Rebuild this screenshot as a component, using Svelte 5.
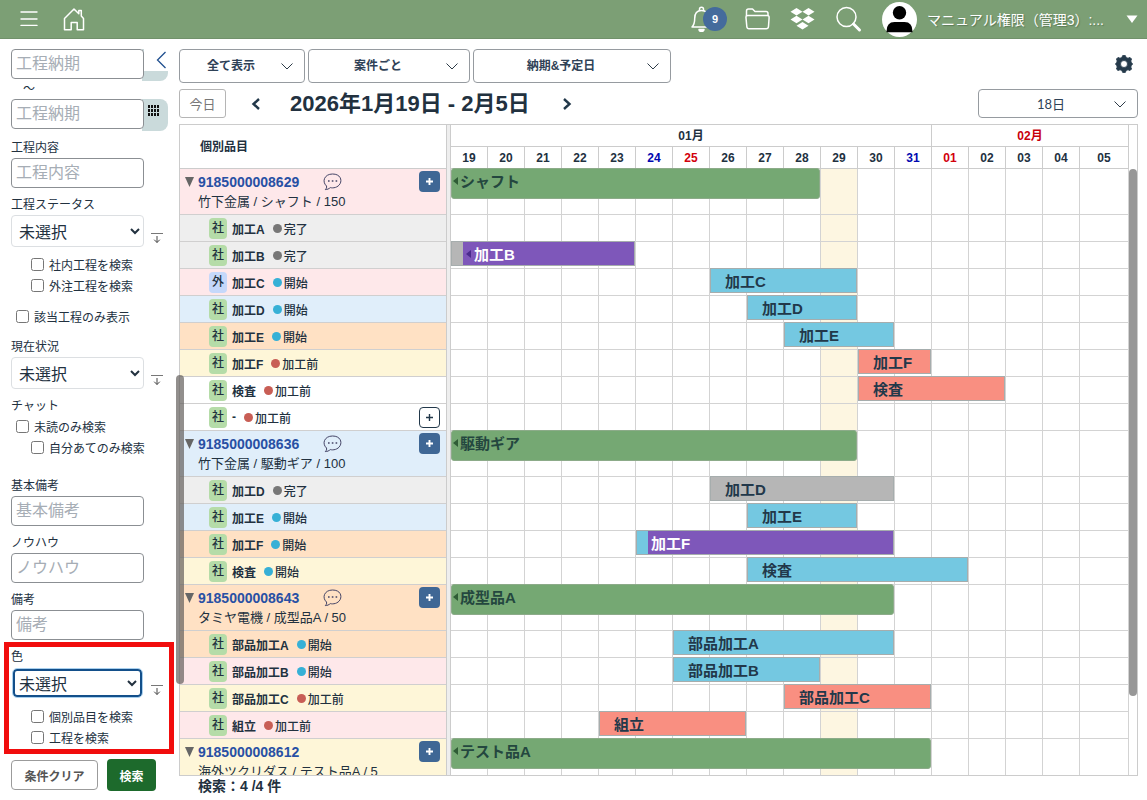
<script>
  const statuses = {
    done: { label: '完了', color: '#777' },
    started: { label: '開始', color: '#36b0d6' },
    before: { label: '加工前', color: '#c85e55' },
  };

  const days = [19, 20, 21, 22, 23, 24, 25, 26, 27, 28, 29, 30, 31, 1, 2, 3, 4, 5].map((d) => ({
    text: String(d).padStart(2, '0'),
    kind: d === 24 || d === 31 ? 'sat' : d === 25 || d === 1 ? 'sun' : '',
    today: d === 29,
  }));

  // Bars are given as [first column, end column, colour] on the 18-day grid.
  const groups = [
    {
      no: '9185000008629', info: '竹下金属 / シャフト / 150', bg: 'pink', chat: true, bar: [1, 11], label: 'シャフト',
      rows: [
        { name: '加工A', status: 'done', bg: 'gray' },
        { name: '加工B', status: 'done', bg: 'gray', bar: [1, 6, 'purple'], lead: 'gray', before: true },
        { name: '加工C', status: 'started', bg: 'pink', bar: [8, 12, 'blue'], outside: true },
        { name: '加工D', status: 'started', bg: 'blue', bar: [9, 12, 'blue'] },
        { name: '加工E', status: 'started', bg: 'orange', bar: [10, 13, 'blue'] },
        { name: '加工F', status: 'before', bg: 'yellow', bar: [12, 14, 'red'] },
        { name: '検査', status: 'before', bg: 'white', bar: [12, 16, 'red'] },
        { name: '-', status: 'before', bg: 'white', add: true },
      ],
    },
    {
      no: '9185000008636', info: '竹下金属 / 駆動ギア / 100', bg: 'blue', chat: true, bar: [1, 12], label: '駆動ギア',
      rows: [
        { name: '加工D', status: 'done', bg: 'gray', bar: [8, 13, 'gray'] },
        { name: '加工E', status: 'started', bg: 'blue', bar: [9, 12, 'blue'] },
        { name: '加工F', status: 'started', bg: 'orange', bar: [6, 13, 'purple'], lead: 'blue' },
        { name: '検査', status: 'started', bg: 'yellow', bar: [9, 15, 'blue'] },
      ],
    },
    {
      no: '9185000008643', info: 'タミヤ電機 / 成型品A / 50', bg: 'orange', chat: true, bar: [1, 13], label: '成型品A',
      rows: [
        { name: '部品加工A', status: 'started', bg: 'orange', bar: [7, 13, 'blue'] },
        { name: '部品加工B', status: 'started', bg: 'pink', bar: [7, 11, 'blue'] },
        { name: '部品加工C', status: 'before', bg: 'yellow', bar: [10, 14, 'red'] },
        { name: '組立', status: 'before', bg: 'pink', bar: [5, 9, 'red'] },
      ],
    },
    {
      no: '9185000008612', info: '海外ツクリダス / テスト品A / 5', bg: 'yellow', chat: false, bar: [1, 14], label: 'テスト品A',
      rows: [],
    },
  ];
</script>

{#snippet check(label, nested)}
  <label class="check" class:nested><input type="checkbox" /><span>{label}</span></label>
{/snippet}

{#snippet textField(id, label)}
  <div class="field">
    <label class="caption" for={id}>{label}</label>
    <input class="text" {id} type="text" placeholder={label} />
  </div>
{/snippet}

{#snippet pick(id, label)}
  <label class="caption" for={id}>{label}</label>
  <div class="pick">
    <select {id}><option>未選択</option></select>
    <button class="expand" aria-label="展開">
      <svg width="12" height="11" viewBox="0 0 12 11" fill="none" stroke="#444"><path d="M0 1.500h12" stroke="#777" /><path d="M6 4v6.500M3.200 7.700l2.800 2.800 2.800-2.800" /></svg>
    </button>
  </div>
{/snippet}

{#snippet dropdown(cls, label, text)}
  <div class="dropdown {cls}">
    <select aria-label={label}><option>{text}</option></select>
    <svg width="12" height="7" viewBox="0 0 12 7" fill="none" stroke="#2d3b47"><path d="M.5.5 6 6 11.5.5" /></svg>
  </div>
{/snippet}

{#snippet calendarIcon()}
  <svg width="11" height="11" viewBox="0 0 11 11" fill="#111">
    {#each [0, 4, 8] as y}{#each [0, 3, 6, 9] as x}<rect {x} {y} width="2" height="3" />{/each}{/each}
  </svg>
{/snippet}

{#snippet cells()}
  {#each days as day, i}<span class="cell" class:today={day.today} style:grid-column={i + 1}></span>{/each}
{/snippet}

<div class="app">
  <header>
    <button class="icon" aria-label="メニュー">
      <svg width="18" height="16" viewBox="0 0 18 16" stroke="#fff" stroke-width="1.4" stroke-linecap="round"><path d="M1 1h16M1 8h16M1 14.400h16" /></svg>
    </button>
    <a class="icon home" href="#home" aria-label="ホーム">
      <svg width="22" height="23" viewBox="0 0 22 23" fill="none" stroke="#fff" stroke-width="1.500" stroke-linejoin="round"><path d="M1.500 10.500 11 1l4.800 4.700V2.500h2.500v5.600l2.200 2.400v11.300h-6.300v-7.300h-6v7.300H1.500z" /></svg>
    </a>
    <div class="tools">
      <button class="icon bell" aria-label="通知">
        <svg width="22" height="26" viewBox="0 0 22 26" fill="none" stroke="#fff" stroke-width="1.500" stroke-linejoin="round"><path d="M1 21c2-2 2.700-4.500 2.700-8.500 0-5 2.600-8 6.800-8s6.800 3 6.800 8c0 4 .7 6.500 2.700 8.500z" /><path d="M8.500 4.500V3.200a2 2 0 0 1 4 0v1.300" /><path d="M8 23.500h5a2.500 2 0 0 1-5 0z" fill="#fff" /></svg>
        <span class="count">9</span>
      </button>
      <button class="icon folder" aria-label="フォルダ">
        <svg width="25" height="22" viewBox="0 0 25 22" fill="none" stroke="#fff" stroke-width="1.500" stroke-linejoin="round"><path d="M1.500 8V3Q1.500 1 3.500 1h4l2.500 2.500h11q2 0 2 2V8" /><path d="M3 7.500h19q2.300 0 2.100 2.300l-.6 8.700q-.2 2.300-2.300 2.300H4q-2 0-2.200-2.300L1 9.800q-.2-2.300 2-2.300z" /></svg>
      </button>
      <button class="icon drop" aria-label="Dropbox">
        <svg width="25" height="22" viewBox="0 0 25 22" fill="#fff"><path d="m6.500 0 6 3.800-6 3.800-6-3.800zM18.500 0l6 3.800-6 3.800-6-3.800zM6.500 7.700l6 3.800-6 3.800-6-3.800zM18.500 7.700l6 3.800-6 3.800-6-3.800zM12.500 14l6 3.800-6 3.800-6-3.800z" /></svg>
      </button>
      <button class="icon" aria-label="検索">
        <svg width="27" height="27" viewBox="0 0 27 27" fill="none" stroke="#fff"><circle cx="11.500" cy="11" r="9.500" stroke-width="1.500" /><path d="m18.500 18 6 6" stroke-width="3" stroke-linecap="round" /></svg>
      </button>
      <button class="user">
        <svg width="35" height="35" viewBox="0 0 35 35"><circle cx="17.500" cy="17.500" r="17.500" fill="#fff" /><circle cx="17.500" cy="10.800" r="6.700" /><path d="M4.500 29.500q0-9.500 8-9.500h10q8 0 8 9.500v.8h-26z" /></svg>
        <span class="name">マニュアル権限（管理3）:...</span>
        <svg width="12" height="8" viewBox="0 0 12 8" fill="#fff"><path d="M.5.500h11L6 8z" /></svg>
      </button>
    </div>
  </header>

  <div class="body">
    <aside>
      <div class="date">
        <input class="text" type="text" placeholder="工程納期" aria-label="工程納期 開始" />
        <button class="cal" aria-label="カレンダー"></button>
        <button class="collapse" aria-label="閉じる">
          <svg width="11" height="18" viewBox="0 0 11 18" fill="none" stroke="#1f4f8f" stroke-width="1.300"><path d="M9.500 1 1.500 9l8 8" /></svg>
        </button>
      </div>
      <div class="tilde">〜</div>
      <div class="date">
        <input class="text" type="text" placeholder="工程納期" aria-label="工程納期 終了" />
        <button class="cal" aria-label="カレンダー">{@render calendarIcon()}</button>
      </div>
      <div class="stack">
        {@render textField('content', '工程内容')}
        <div class="field">
          {@render pick('status', '工程ステータス')}
          <div class="checks">
            {@render check('社内工程を検索', true)}
            {@render check('外注工程を検索', true)}
          </div>
        </div>
        <div class="only">{@render check('該当工程のみ表示', false)}</div>
        <div class="field">{@render pick('current', '現在状況')}</div>
        <div class="field chat">
          <span class="caption">チャット</span>
          {@render check('未読のみ検索', false)}
          {@render check('自分あてのみ検索', true)}
        </div>
        {@render textField('basic', '基本備考')}
        {@render textField('knowhow', 'ノウハウ')}
        {@render textField('note', '備考')}
      </div>
      <div class="field marked">
        {@render pick('color', '色')}
        <div class="checks">
          {@render check('個別品目を検索', true)}
          {@render check('工程を検索', true)}
        </div>
      </div>
      <div class="actions">
        <button class="clear">条件クリア</button>
        <button class="search">検索</button>
      </div>
      <span class="thumb"></span>
    </aside>

    <main>
      <div class="bar-row">
        {@render dropdown('w1', '表示', '全て表示')}
        {@render dropdown('w2', '単位', '案件ごと')}
        {@render dropdown('w3', '日付', '納期&予定日')}
        <button class="gear" aria-label="設定">
          <svg width="18" height="18" viewBox="0 0 18 18" fill="#253a4b"><path fill-rule="evenodd" stroke="#253a4b" stroke-width=".8" stroke-linejoin="round" d="M7.700.5h2.600l.9 2 1.800.7 2-.8 1.600 1.600-.8 2 .7 1.700 1.200 1.300-1.200 1.300-.7 1.700.8 2-1.600 1.600-2-.8-1.800.7-.9 2H7.700l-.9-2-1.800-.7-2 .8L1.400 14l.8-2-.7-1.700L.4 9l1.100-1.300.7-1.700-.8-2L3 2.400l2 .8 1.800-.7zM9 5.500a3.500 3.500 0 1 0 0 7 3.500 3.500 0 0 0 0-7z" /></svg>
        </button>
      </div>
      <div class="bar-row second">
        <button class="today-btn">今日</button>
        <button class="step" aria-label="前へ"><svg width="10" height="12" viewBox="0 0 10 12" fill="none" stroke="#22384a" stroke-width="2.400"><path d="M8 1 2.500 6 8 11" /></svg></button>
        <h1>2026年1月19日 - 2月5日</h1>
        <button class="step" aria-label="次へ"><svg width="10" height="12" viewBox="0 0 10 12" fill="none" stroke="#22384a" stroke-width="2.400"><path d="M2 1l5.500 5L2 11" /></svg></button>
        {@render dropdown('range', '期間', '18日')}
      </div>

      <div class="gantt">
        <section class="items">
          <div class="items-head">個別品目</div>
          {#each groups as g}
            <div class="group {g.bg}">
              <div class="line">
                <button class="fold" aria-label="折りたたむ"><svg width="11" height="10" viewBox="0 0 11 10" fill="#666"><path d="M1 0h9L5.500 10z" /></svg></button>
                <a href="#item">{g.no}</a>
                {#if g.chat}
                  <button class="talk" aria-label="チャット">
                    <svg width="19" height="18" viewBox="0 0 19 18" fill="none" stroke="#446"><path d="M3.500 13C-1.500 8.500 1.500 1 9.500 1S19 7 17.200 10.500C15 14.800 9.800 15.300 7.300 14.600 6 15.800 4.200 16.600 2.300 16.600 3.400 15.600 3.900 14.500 3.500 13z" /><path d="M5 8h1.600M8.800 8h1.600M12.600 8h1.600" stroke-width="1.700" /></svg>
                  </button>
                {/if}
                <button class="plus" aria-label="追加"><svg width="9" height="9" viewBox="0 0 9 9" stroke="currentColor" stroke-width="1.900"><path d="M4.500 1v7M1 4.500h7" /></svg></button>
              </div>
              <div class="info">{g.info}</div>
            </div>
            {#each g.rows as r}
              <div class="item {r.bg}">
                <span class="badge" class:outside={r.outside}>{r.outside ? '外' : '社'}</span>
                <b>{r.name}</b>
                <i class="dot" style:background={statuses[r.status].color}></i>
                <span class="state">{statuses[r.status].label}</span>
                {#if r.add}
                  <button class="plus open" aria-label="追加"><svg width="9" height="9" viewBox="0 0 9 9" stroke="currentColor" stroke-width="1.400"><path d="M4.500 1v7M1 4.500h7" /></svg></button>
                {/if}
              </div>
            {/each}
          {/each}
        </section>
        <div class="divider"></div>
        <section class="chart">
          <div class="track months"><span class="jan">01月</span><span class="feb">02月</span></div>
          <div class="track dates">{#each days as d}<span class={d.kind}>{d.text}</span>{/each}</div>
          <div class="rows">
            {#each groups as g}
              <div class="track tall">
                {@render cells()}
                <div class="bar total" style:grid-column="{g.bar[0]} / {g.bar[1]}">
                  <svg width="5" height="8" viewBox="0 0 5 8" fill="#2f5c36"><path d="M5 0v8L0 4z" /></svg>{g.label}
                </div>
              </div>
              {#each g.rows as r}
                <div class="track">
                  {@render cells()}
                  {#if r.bar}
                    <div class="bar task b-{r.bar[2]}" class:before={r.before} style:grid-column="{r.bar[0]} / {r.bar[1]}">
                      {#if r.lead}<span class="lead b-{r.lead}"></span>{/if}
                      {#if r.before}<svg width="5" height="8" viewBox="0 0 5 8" fill="#4a2a8c"><path d="M5 0v8L0 4z" /></svg>{/if}
                      {r.name}
                    </div>
                  {/if}
                </div>
              {/each}
            {/each}
          </div>
        </section>
        <div class="gutter"><span></span></div>
      </div>
      <footer>検索：4 /4 件</footer>
    </main>
  </div>
</div>

<style>
  :global(body) { margin: 0; background: #fff; }
  .app { height: 100vh; display: flex; flex-direction: column; overflow: hidden; color: #22313f; font: 12px "Liberation Sans", "Noto Sans CJK JP", sans-serif; }
  .app *, .app *::before { box-sizing: border-box; }
  button, input, select { font-family: inherit; color: inherit; margin: 0; }
  button { border: 0; padding: 0; background: none; display: flex; align-items: center; justify-content: center; }
  svg { display: block; flex: none; }

  header { height: 39px; flex: none; background: #7c9f75; border-bottom: 1px solid #71916b; display: flex; align-items: center; padding: 0 9px 0 20px; }
  .home { margin-left: 25px; }
  .tools { margin-left: auto; display: flex; align-items: center; }
  .bell { position: relative; width: 38px; justify-content: flex-start; }
  .count { position: absolute; left: 12px; top: 1px; width: 24px; height: 24px; border-radius: 50%; background: #446b9c; color: #fff; font-weight: bold; font-size: 11px; line-height: 24px; }
  .folder { margin: 0 20px 0 16px; }
  .drop { margin-right: 20px; }
  .user { margin-left: 20px; color: #fff; font-size: 14px; }
  .name { margin: 0 22px 0 10px; white-space: nowrap; text-shadow: 1px 1px 1px #5c7b58; }

  .body { flex: 1; min-height: 0; display: flex; }
  aside { width: 179px; flex: none; padding: 10px 5px 0 4px; position: relative; }
  .date { display: flex; position: relative; height: 30px; padding-left: 7px; }
  .text { width: 133px; height: 30px; border: 1px solid #8b8f93; border-radius: 4px; padding: 0 4px; font-size: 16px; background: #fff; z-index: 1; }
  .text::placeholder { color: #a6adb5; }
  .cal { width: 26px; height: 32px; margin-left: -2px; background: #cadadb; border-radius: 0 8px 8px 0; align-items: flex-start; padding: 6px 4px 0 0; }
  .collapse { position: absolute; left: 140px; top: -4px; width: 30px; height: 26px; background: #fff; }
  .collapse svg { margin: 4px 0 0 4px; }
  .tilde { height: 20px; line-height: 20px; padding-left: 19px; }
  .stack { padding: 7px 0 2px 7px; display: flex; flex-direction: column; gap: 5px; }
  .field { display: flex; flex-direction: column; }
  .caption { line-height: 22px; padding-top: 1px; height: 22px; }
  .pick { display: flex; align-items: flex-end; gap: 7px; }
  .pick select { width: 133px; height: 32px; border: 1px solid #dcdfe2; border-radius: 4px; background: #fff; font-size: 16px; padding: 2px 0 0 3px; }
  .expand { padding-bottom: 4px; }
  .checks { padding-top: 7px; }
  .check { display: flex; align-items: center; gap: 5px; height: 21px; padding-left: 5px; white-space: nowrap; }
  .check.nested { padding-left: 20px; }
  .check input { width: 13px; height: 13px; }
  .only { padding: 5px 0 3px; }
  .chat { padding-bottom: 11px; }
  .marked { width: 170px; border: 5px solid #f10d0d; padding: 0 0 0 2px; }
  .marked .caption { line-height: 20px; height: 20px; padding: 0; }
  .marked .pick { padding: 2px 0 0 2px; gap: 9px; }
  .marked select { width: 129px; height: 28px; border: 2px solid #134f8a; outline: 1px solid #a9d0ee; padding-left: 0; }
  .marked .expand { padding-bottom: 2px; }
  .marked .checks { padding: 9px 0 1px; }
  .actions { display: flex; align-items: center; gap: 9px; padding: 5px 0 0 7px; }
  .clear { width: 87px; height: 30px; border: 1px solid #9b9b9b; border-radius: 4px; color: #555; font-weight: bold; font-size: 12px; }
  .search { width: 49px; height: 32px; border-radius: 4px; background: #1d6a2c; color: #fff; font-weight: bold; font-size: 12px; }
  .thumb { position: absolute; left: 176px; top: 336px; width: 8px; height: 309px; border-radius: 4px; background: rgba(100, 95, 92, 0.7); z-index: 2; }

  main { flex: 1; min-width: 0; display: flex; flex-direction: column; padding: 10px 9px 0 0; }
  .bar-row { display: flex; gap: 3px; height: 34px; flex: none; align-items: center; }
  .bar-row.second { height: 29px; margin: 6px 0; gap: 0; }
  .dropdown { position: relative; height: 100%; }
  .dropdown select { appearance: none; width: 100%; height: 100%; border: 1px solid #969ba0; border-radius: 4px; background: #fff; color: #2f4257; font-size: 12px; font-weight: bold; text-align: center; text-align-last: center; padding: 0 22px 0 0; }
  .dropdown svg { position: absolute; right: 12px; top: calc(50% - 3px); pointer-events: none; }
  .w1 { width: 126px; }
  .w2 { width: 162px; }
  .w3 { width: 198px; }
  .gear { margin-left: auto; padding: 0 5px 4px 0; }
  .today-btn { width: 47px; height: 29px; border: 1px solid #b5b5b5; border-radius: 3px; color: #777; font-size: 13px; }
  .step { width: 60px; height: 29px; }
  h1 { margin: 0 7px 0 4px; font-size: 22px; line-height: 29px; white-space: nowrap; }
  .range { width: 160px; margin-left: auto; }
  .range select { font-family: Lato, "Noto Sans CJK JP", sans-serif; font-size: 13px; font-weight: normal; padding-right: 14px; }

  .gantt { flex: 1; min-height: 0; display: flex; overflow: hidden; border: solid #ccc; border-width: 1px 0; }
  .items { width: 267px; flex: none; border-left: 1px solid #ccc; }
  .items-head { height: 44px; line-height: 45px; padding-left: 20px; font-weight: bold; border-bottom: 1px solid #ccc; }
  .group { height: 46px; border-bottom: 1px solid #d0cfcf; padding: 2px 6px 0 4px; }
  .line { display: flex; align-items: center; height: 21px; }
  .line a { width: 125px; margin-left: 3px; color: #2850a4; font-size: 14px; font-weight: bold; text-decoration: none; }
  .info { margin-left: 14px; font-size: 13px; line-height: 20px; white-space: nowrap; }
  .plus { width: 21px; height: 21px; border-radius: 4px; background: #3f6795; color: #fff; margin-left: auto; }
  .plus.open { background: #fff; color: #22384a; border: 1px solid #22384a; }
  .item { height: 27px; border-bottom: 1px solid #d0cfcf; display: flex; align-items: center; padding: 0 6px 0 29px; }
  .badge { width: 18px; height: 21px; line-height: 21px; border-radius: 4px; background: #b5dca8; text-align: center; font-weight: 500; }
  .badge.outside { background: #c5d8fa; }
  .item b { margin: 0 8px 0 5px; }
  .dot { width: 9px; height: 9px; border-radius: 50%; margin-right: 2px; }
  .state { font-weight: 500; }
  .pink { background: #fee8ea; }
  .gray { background: #eee; }
  .blue { background: #e0eefa; }
  .orange { background: #ffe1c4; }
  .yellow { background: #fef6d8; }
  .divider { width: 5px; flex: none; background: #eee; border: solid #ccc; border-width: 0 1px; }

  .chart { flex: 1; min-width: 0; }
  .track { display: grid; grid-template-columns: repeat(17, 37px) 1fr; grid-template-rows: 27px; }
  .tall { grid-template-rows: 46px; }
  .months, .dates { grid-template-rows: 22px; line-height: 22px; font-weight: bold; text-align: center; }
  .months span, .dates span { border: solid #ccc; border-width: 0 1px 1px 0; }
  .jan { grid-column: 1 / 14; }
  .feb { grid-column: 14 / 19; color: #c8000c; }
  .sat { color: #0008b0; }
  .sun { color: #d2000c; }
  .cell { grid-row: 1; border: solid #d3d3d3; border-width: 0 1px 1px 0; }
  .cell.today { background: #fdf6e1; }
  .bar { grid-row: 1; display: flex; align-items: center; font-size: 15px; font-weight: bold; white-space: nowrap; margin: -1px 1px 0 0; border: 1px solid #a6adad; color: #22384a; position: relative; }
  .total { height: 31px; background: #75a873; border-color: #8cab89; border-radius: 3px; padding: 0 0 6px 1px; gap: 2px; color: #24473f; }
  .task { height: 25px; padding-left: 14px; }
  .task:has(.lead) { padding-left: 0; color: #fff; gap: 3px; }
  .lead { width: 11px; align-self: stretch; }
  .b-blue { background: #74c8e1; }
  .b-red { background: #f98f81; }
  .b-gray { background: #b6b6b6; }
  .b-purple { background: #7e57ba; }
  .gutter { width: 9px; flex: none; padding-top: 44px; border-right: 1px solid #ccc; }
  .gutter span { display: block; width: 8px; height: 527px; border-radius: 4px; background: #979797; }
  footer { height: 24px; flex: none; padding-left: 19px; font-size: 14px; font-weight: bold; line-height: 20px; }
</style>
